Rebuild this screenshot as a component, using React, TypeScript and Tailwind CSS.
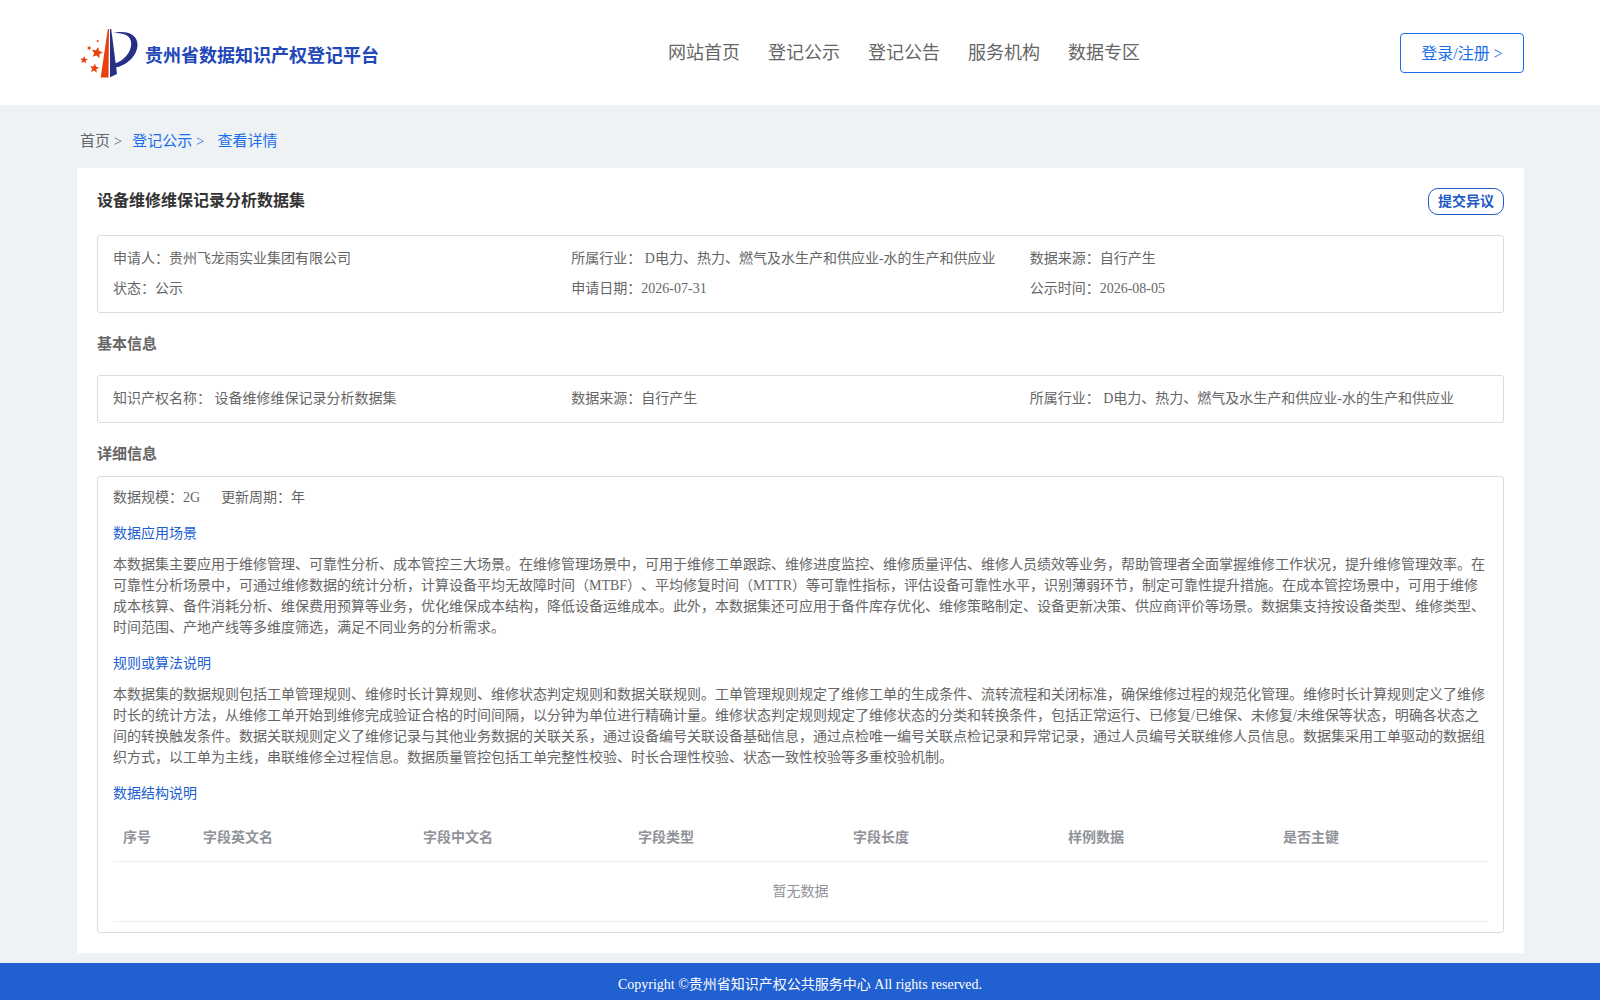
import React from 'react';

const navItems = ['网站首页', '登记公示', '登记公告', '服务机构', '数据专区'];

const summary = [
  '申请人：贵州飞龙雨实业集团有限公司',
  '所属行业： D电力、热力、燃气及水生产和供应业-水的生产和供应业',
  '数据来源：自行产生',
  '状态：公示',
  '申请日期：2026-07-31',
  '公示时间：2026-08-05',
];

const basicInfo = [
  '知识产权名称： 设备维修维保记录分析数据集',
  '数据来源：自行产生',
  '所属行业： D电力、热力、燃气及水生产和供应业-水的生产和供应业',
];

const columns = ['序号', '字段英文名', '字段中文名', '字段类型', '字段长度', '样例数据', '是否主键'];
const columnWidths = ['w-20', 'w-[220px]', '', '', '', '', ''];

const scenario =
  '本数据集主要应用于维修管理、可靠性分析、成本管控三大场景。在维修管理场景中，可用于维修工单跟踪、维修进度监控、维修质量评估、维修人员绩效等业务，帮助管理者全面掌握维修工作状况，提升维修管理效率。在可靠性分析场景中，可通过维修数据的统计分析，计算设备平均无故障时间（MTBF）、平均修复时间（MTTR）等可靠性指标，评估设备可靠性水平，识别薄弱环节，制定可靠性提升措施。在成本管控场景中，可用于维修成本核算、备件消耗分析、维保费用预算等业务，优化维保成本结构，降低设备运维成本。此外，本数据集还可应用于备件库存优化、维修策略制定、设备更新决策、供应商评价等场景。数据集支持按设备类型、维修类型、时间范围、产地产线等多维度筛选，满足不同业务的分析需求。';

const rules =
  '本数据集的数据规则包括工单管理规则、维修时长计算规则、维修状态判定规则和数据关联规则。工单管理规则规定了维修工单的生成条件、流转流程和关闭标准，确保维修过程的规范化管理。维修时长计算规则定义了维修时长的统计方法，从维修工单开始到维修完成验证合格的时间间隔，以分钟为单位进行精确计量。维修状态判定规则规定了维修状态的分类和转换条件，包括正常运行、已修复/已维保、未修复/未维保等状态，明确各状态之间的转换触发条件。数据关联规则定义了维修记录与其他业务数据的关联关系，通过设备编号关联设备基础信息，通过点检唯一编号关联点检记录和异常记录，通过人员编号关联维修人员信息。数据集采用工单驱动的数据组织方式，以工单为主线，串联维修全过程信息。数据质量管控包括工单完整性校验、时长合理性校验、状态一致性校验等多重校验机制。';

function Star({ x, y, r, rotate = 0 }: { x: number; y: number; r: number; rotate?: number }) {
  return (
    <path
      d="M0-1 .27-.36.95-.31.43.14.59.81 0 .45-.59.81-.43.14-.95-.31-.27-.36Z"
      transform={`translate(${x} ${y}) rotate(${rotate}) scale(${r})`}
    />
  );
}

function Logo() {
  return (
    <svg className="h-[50px] w-[60px] shrink-0" viewBox="0 0 60 50" aria-hidden="true">
      <g fill="#e8430f">
        <path d="M27.8 1h1.2L28.500 49.5h-7.800Z" />
        <Star x={17} y={24.8} r={6} rotate={12} />
        <Star x={4} y={32} r={3.900} rotate={5} />
        <Star x={14.400} y={40.400} r={4.900} rotate={8} />
        <Star x={9.2} y={20} r={2.500} rotate={20} />
        <Star x={17.700} y={13} r={1.600} />
      </g>
      <g fill="#272f86">
        <path d="M30 1h1.2L37 46 30 49.300Z" />
        <path d="M32.200 5.300C45 1.500 57.500 5.500 57.500 16.500 57.500 27.500 47 37.500 35.500 39.500L34.800 35.500C44 32.500 51.200 24.500 51.200 15.500 51.200 7.500 43 4.200 32.200 5.300Z" />
      </g>
    </svg>
  );
}

function InfoBox({ items }: { items: string[] }) {
  return (
    <div className="grid grid-cols-3 rounded-[3px] border border-[#dcdcdc] px-[15px] py-2">
      {items.map((item) => (
        <div key={item} className="leading-[30px]">
          {item}
        </div>
      ))}
    </div>
  );
}

function DetailSection({ title, children }: { title: string; children: React.ReactNode }) {
  return (
    <section className="mt-4">
      <h3 className="mb-2.5 leading-5 text-[#2160d0]">{title}</h3>
      {children}
    </section>
  );
}

export default function App() {
  return (
    <div className="min-h-screen bg-[#eef2f5] font-['Liberation_Serif','Noto_Sans_CJK_SC',serif] text-sm text-[#666] [text-spacing-trim:space-all]">
      <header className="flex h-[105px] items-center justify-between bg-white pr-19 pl-[77px]">
        <a href="#" className="flex w-[331px] items-center gap-[5px] pl-[3px]">
          <Logo />
          <span className="pt-1.5 text-lg font-bold whitespace-nowrap text-[#2147b8]">贵州省数据知识产权登记平台</span>
        </a>
        <nav className="flex gap-7 text-lg">
          {navItems.map((item) => (
            <a key={item} href="#">
              {item}
            </a>
          ))}
        </nav>
        <button
          type="button"
          className="h-10 w-31 rounded border border-[#1a6ee8] pt-0.5 text-base whitespace-nowrap text-[#1a6ee8]"
        >
          登录/注册 &gt;
        </button>
      </header>

      <main className="pr-19 pb-2.5 pl-[77px]">
        <nav className="flex h-[63px] items-center pt-2.5 pl-[3px] text-[15px]">
          <a href="#" className="mr-2.5">
            首页 &gt;
          </a>
          <a href="#" className="mr-[13px] text-[#1a6ee8]">
            登记公示 &gt;
          </a>
          <span className="text-[#1a6ee8]">查看详情</span>
        </nav>

        <div className="bg-white p-5">
          <div className="mb-5 flex items-start justify-between">
            <h1 className="pt-px text-base font-bold text-[#333]">设备维修维保记录分析数据集</h1>
            <button
              type="button"
              className="h-[27px] w-19 rounded-[10px] border border-[#1f5ac6] text-sm font-bold text-[#1f5ac6]"
            >
              提交异议
            </button>
          </div>

          <InfoBox items={summary} />

          <h2 className="my-5 text-[15px] leading-[22px] font-bold">基本信息</h2>
          <InfoBox items={basicInfo} />

          <h2 className="mt-5 mb-[11px] text-[15px] leading-[22px] font-bold">详细信息</h2>
          <div className="rounded-[3px] border border-[#dcdcdc] px-[15px] pt-[11px] pb-2.5">
            <div className="flex gap-[21px] leading-5">
              <span>数据规模：2G</span>
              <span>更新周期：年</span>
            </div>
            <DetailSection title="数据应用场景">
              <p className="leading-[21px]">{scenario}</p>
            </DetailSection>
            <DetailSection title="规则或算法说明">
              <p className="leading-[21px]">{rules}</p>
            </DetailSection>
            <DetailSection title="数据结构说明">
              <table className="w-full table-fixed text-left text-[#909399]">
                <colgroup>
                  {columns.map((column, i) => (
                    <col key={column} className={columnWidths[i]} />
                  ))}
                </colgroup>
                <thead>
                  <tr className="h-[47px] border-b border-[#ebeef5]">
                    {columns.map((column) => (
                      <th key={column} className="px-2.5 pt-px font-bold">
                        {column}
                      </th>
                    ))}
                  </tr>
                </thead>
                <tbody>
                  <tr className="h-15 border-b border-[#ebeef5]">
                    <td colSpan={columns.length} className="pt-0.5 text-center">
                      暂无数据
                    </td>
                  </tr>
                </tbody>
              </table>
            </DetailSection>
          </div>
        </div>
      </main>

      <footer className="bg-[#2160d0] pt-[11px] pb-1 text-center leading-[22px] text-white">
        Copyright ©贵州省知识产权公共服务中心 All rights reserved.
      </footer>
    </div>
  );
}
